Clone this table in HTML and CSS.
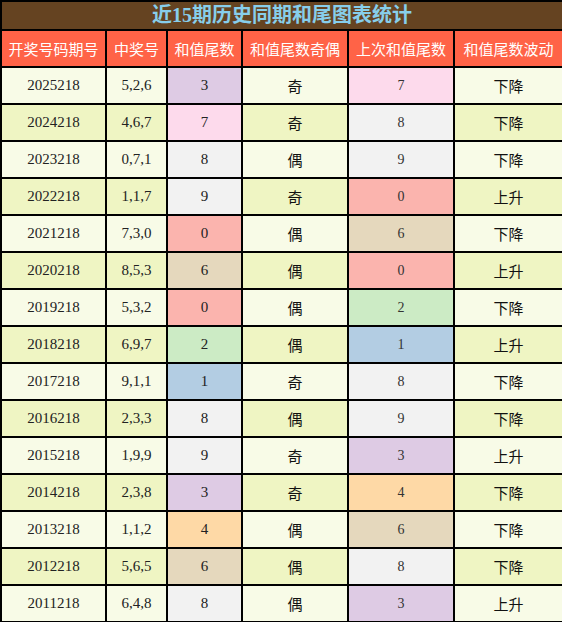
FILE: index.html
```html
<!DOCTYPE html>
<html lang="zh-CN">

<head>
    <meta charset="UTF-8">
    <meta name="viewport" content="width=device-width, initial-scale=1.0">
    <title>近15期历史同期和尾图表统计</title>
    <link rel="stylesheet" href="styles.css">
</head>

<body>
    <table class="stats-table">
        <colgroup>
            <col class="col-issue">
            <col class="col-number">
            <col class="col-tail">
            <col class="col-parity">
            <col class="col-prev">
            <col class="col-trend">
        </colgroup>
        <thead>
            <tr>
                <th colspan="6" class="title">近15期历史同期和尾图表统计</th>
            </tr>
            <tr class="head-row">
                <th>开奖号码期号</th>
                <th>中奖号</th>
                <th>和值尾数</th>
                <th>和值尾数奇偶</th>
                <th>上次和值尾数</th>
                <th>和值尾数波动</th>
            </tr>
        </thead>
        <tbody>
            <tr><td class="num">2025218</td><td class="num">5,2,6</td><td class="num d3">3</td><td class="cn">奇</td><td class="prev d7">7</td><td class="cn">下降</td></tr>
            <tr><td class="num">2024218</td><td class="num">4,6,7</td><td class="num d7">7</td><td class="cn">奇</td><td class="prev d8">8</td><td class="cn">下降</td></tr>
            <tr><td class="num">2023218</td><td class="num">0,7,1</td><td class="num d8">8</td><td class="cn">偶</td><td class="prev d9">9</td><td class="cn">下降</td></tr>
            <tr><td class="num">2022218</td><td class="num">1,1,7</td><td class="num d9">9</td><td class="cn">奇</td><td class="prev d0">0</td><td class="cn">上升</td></tr>
            <tr><td class="num">2021218</td><td class="num">7,3,0</td><td class="num d0">0</td><td class="cn">偶</td><td class="prev d6">6</td><td class="cn">下降</td></tr>
            <tr><td class="num">2020218</td><td class="num">8,5,3</td><td class="num d6">6</td><td class="cn">偶</td><td class="prev d0">0</td><td class="cn">上升</td></tr>
            <tr><td class="num">2019218</td><td class="num">5,3,2</td><td class="num d0">0</td><td class="cn">偶</td><td class="prev d2">2</td><td class="cn">下降</td></tr>
            <tr><td class="num">2018218</td><td class="num">6,9,7</td><td class="num d2">2</td><td class="cn">偶</td><td class="prev d1">1</td><td class="cn">上升</td></tr>
            <tr><td class="num">2017218</td><td class="num">9,1,1</td><td class="num d1">1</td><td class="cn">奇</td><td class="prev d8">8</td><td class="cn">下降</td></tr>
            <tr><td class="num">2016218</td><td class="num">2,3,3</td><td class="num d8">8</td><td class="cn">偶</td><td class="prev d9">9</td><td class="cn">下降</td></tr>
            <tr><td class="num">2015218</td><td class="num">1,9,9</td><td class="num d9">9</td><td class="cn">奇</td><td class="prev d3">3</td><td class="cn">上升</td></tr>
            <tr><td class="num">2014218</td><td class="num">2,3,8</td><td class="num d3">3</td><td class="cn">奇</td><td class="prev d4">4</td><td class="cn">下降</td></tr>
            <tr><td class="num">2013218</td><td class="num">1,1,2</td><td class="num d4">4</td><td class="cn">偶</td><td class="prev d6">6</td><td class="cn">下降</td></tr>
            <tr><td class="num">2012218</td><td class="num">5,6,5</td><td class="num d6">6</td><td class="cn">偶</td><td class="prev d8">8</td><td class="cn">下降</td></tr>
            <tr><td class="num">2011218</td><td class="num">6,4,8</td><td class="num d8">8</td><td class="cn">偶</td><td class="prev d3">3</td><td class="cn">上升</td></tr>
        </tbody>
    </table>
</body>

</html>
```

FILE: styles.css
```css
* {
    margin: 0;
    padding: 0;
    box-sizing: border-box;
}

body {
    background-color: #ffffff;
    font-family: "Noto Sans CJK SC", sans-serif;
}

.stats-table {
    width: 562px;
    border-collapse: collapse;
    table-layout: fixed;
    border: 2px solid #000;
}

.col-issue { width: 105px; }
.col-number { width: 61px; }
.col-tail { width: 75px; }
.col-parity { width: 106px; }
.col-prev { width: 106px; }
.col-trend { width: 109px; }

th,
td {
    border: 2px solid #000;
    text-align: center;
    vertical-align: middle;
    white-space: nowrap;
    overflow: hidden;
}

.title {
    height: 29px;
    background-color: #654321;
    color: #87ceeb;
    font-family: "Liberation Serif", "Noto Sans CJK SC", serif;
    font-size: 20px;
    font-weight: bold;
    line-height: 25px;
}

.head-row th {
    height: 37px;
    background-color: #ff6347;
    color: #fff;
    font-size: 15px;
    font-weight: normal;
}

tbody tr {
    height: 37px;
}

tbody tr:nth-child(odd) {
    background-color: #f8fbe7;
}

tbody tr:nth-child(even) {
    background-color: #eff5c3;
}

.num {
    font-family: "Liberation Serif", serif;
    font-size: 15px;
    color: #222;
}

.prev {
    font-family: "Liberation Serif", serif;
    font-size: 14px;
    color: #333;
}

.cn {
    font-size: 15px;
    color: #111;
}

.d0 { background-color: #fbb4ae; }
.d1 { background-color: #b3cde3; }
.d2 { background-color: #ccebc5; }
.d3 { background-color: #decbe4; }
.d4 { background-color: #fed9a6; }
.d6 { background-color: #e5d8bd; }
.d7 { background-color: #fddaec; }
.d8 { background-color: #f2f2f2; }
.d9 { background-color: #f2f2f2; }
```
